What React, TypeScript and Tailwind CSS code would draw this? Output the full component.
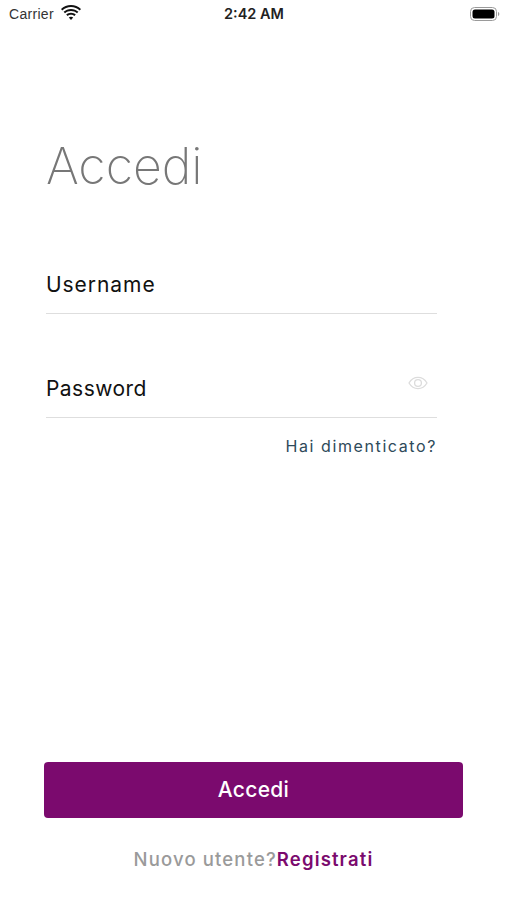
import React from "react";

const WifiIcon = () => (
  <svg width="20" height="15" viewBox="0 0 20 15" fill="#111">
    <path d="M10 2C6.600 2 3.600 3.300 1.300 5.400L0 4C2.700 1.500 6.200 0 10 0s7.300 1.500 10 4l-1.300 1.400C16.400 3.300 13.400 2 10 2z" />
    <path d="M10 6c-2.300 0-4.400.9-6 2.300L2.600 6.800C4.600 5 7.200 3.900 10 3.900s5.400 1.100 7.400 2.900L16 8.300C14.400 6.900 12.300 6 10 6z" />
    <path d="M10 9.800c-1.300 0-2.500.5-3.400 1.300L5.200 9.600C6.500 8.500 8.200 7.800 10 7.800s3.500.7 4.800 1.800l-1.400 1.500c-.9-.8-2.100-1.300-3.400-1.300z" />
    <path d="M10 15l-2.200-2.400c.6-.5 1.400-.8 2.200-.8s1.600.3 2.200.8L10 15z" />
  </svg>
);

const BatteryIcon = () => (
  <svg width="30" height="14" viewBox="0 0 30 14">
    <rect x="0.500" y="0.500" width="26" height="13" rx="4" fill="none" stroke="#9a9a9a" />
    <rect x="2.500" y="2.500" width="22" height="9" rx="2.500" fill="#000" />
    <path d="M28 5v4c.8-.3 1.300-1.100 1.300-2S28.800 5.300 28 5z" fill="#9a9a9a" />
  </svg>
);

const EyeIcon = () => (
  <svg width="20" height="14" viewBox="0 0 20 14" fill="none" stroke="#dcdcdc" strokeWidth="1.300">
    <path d="M1 7c2.200-3.700 5.300-5.600 9-5.600s6.800 1.900 9 5.600c-2.200 3.700-5.300 5.600-9 5.600S3.200 10.700 1 7z" />
    <circle cx="10" cy="7" r="3.400" />
  </svg>
);

export default function App() {
  return (
    <div className="flex flex-col h-[900px] w-full bg-white font-['Inter',sans-serif] overflow-hidden">
      {/* status bar */}
      <div className="relative flex items-center justify-between h-[27px] pl-[9px] pr-[7px]">
        <div className="flex items-center gap-[7px] text-[#333] text-[14px] leading-none font-['Liberation_Sans',sans-serif] tracking-[0.3px]">
          <span>Carrier</span>
          <span className="-mt-[2px]">
            <WifiIcon />
          </span>
        </div>
        <span className="absolute left-[224px] top-[6px] text-[14.500px] leading-[16px] font-semibold text-[#222]">2:42 AM</span>
        <BatteryIcon />
      </div>

      <div className="flex-1 flex flex-col px-[46px]">
        <h1 className="mt-[109px] text-[50px] leading-[60px] font-extralight text-[#777]">Accedi</h1>

        <div className="mt-[66px] w-[391px] h-[52px] border-b border-[#dedede] text-[21px] leading-[26px] tracking-[0.950px] text-[#111] pt-[10px]">
          Username
        </div>

        <div className="mt-[52px] relative w-[391px] h-[52px] border-b border-[#dedede] text-[21px] leading-[26px] tracking-[0.450px] text-[#111] pt-[10px]">
          Password
          <span className="absolute right-[9px] top-[10px]">
            <EyeIcon />
          </span>
        </div>

        <div className="w-[391px] mt-[18px] text-right text-[16px] leading-[20px] tracking-[1.600px] text-[#2e4a5a]">
          Hai dimenticato?
        </div>
      </div>

      <div className="pl-[44px] pr-[44px]">
        <button className="w-full h-[56px] rounded-[4px] bg-[#7b0a6e] text-white text-[21px] tracking-[0.3px] font-medium">Accedi</button>
      </div>
      <div className="mt-[30px] mb-[30px] text-center text-[18.500px] leading-[22px] tracking-[1.150px] font-medium">
        <span className="text-[#9a9a9a]">Nuovo utente?</span>
        <span className="text-[#7b0a6e] font-semibold">Registrati</span>
      </div>
    </div>
  );
}
